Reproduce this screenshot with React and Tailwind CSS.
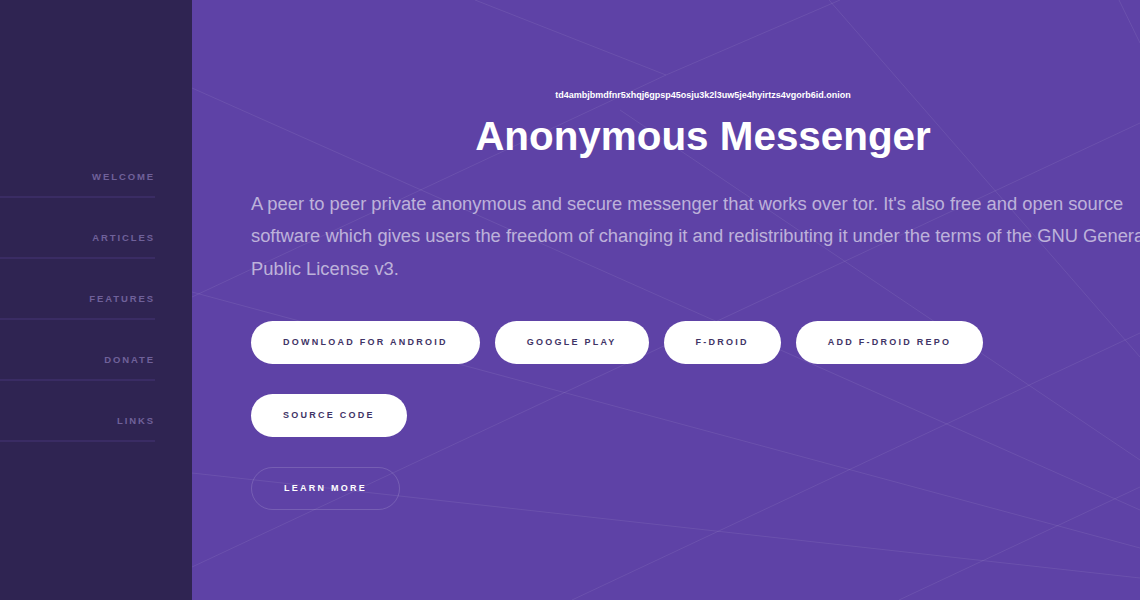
import React from 'react';

const navItems = ['Welcome', 'Articles', 'Features', 'Donate', 'Links'];

// faint network lines behind the hero, in main-area coordinates (948 x 600)
const bgLines = [
  [283, 0, 474, 75],
  [474, 75, 648, 0],
  [0, 297, 474, 75],
  [0, 88, 948, 510],
  [637, 0, 948, 357],
  [927, 0, 948, 43],
  [428, 110, 948, 460],
  [0, 567, 948, 123],
  [380, 600, 948, 333],
  [0, 292, 948, 548],
  [0, 473, 948, 578],
  [948, 487, 707, 600],
];

const Sidebar = () => (
  <aside className="w-[192px] shrink-0 h-full bg-[#2f2452]">
    <nav className="w-[155px] mt-[137px]">
      {navItems.map((item) => (
        <div
          key={item}
          className="h-[61px] flex items-end justify-end pb-[13px] border-b-2 border-[#3a2c64]"
        >
          <span className="text-[9.5px] leading-[12px] font-bold uppercase tracking-[0.2em] text-[#6f619a]">
            {item}
          </span>
        </div>
      ))}
    </nav>
  </aside>
);

const PillButton = ({ children }) => (
  <a className="h-[43px] px-[32px] flex items-center rounded-full bg-white text-[#3f3466] text-[9px] font-bold uppercase tracking-[0.25em] whitespace-nowrap">
    {children}
  </a>
);

const BackgroundLines = () => (
  <svg
    className="absolute inset-0 w-full h-full pointer-events-none"
    viewBox="0 0 948 600"
    preserveAspectRatio="none"
  >
    {bgLines.map(([x1, y1, x2, y2], i) => (
      <line key={i} x1={x1} y1={y1} x2={x2} y2={y2} stroke="rgba(255,255,255,0.08)" strokeWidth="1" />
    ))}
  </svg>
);

export default function App() {
  return (
    <div className="w-[1140px] h-[600px] flex overflow-hidden font-['Liberation_Sans',Arial,sans-serif]">
      <Sidebar />
      <main className="relative flex-1 h-full bg-[#5e42a6] overflow-hidden">
        <BackgroundLines />
        <section className="relative w-[904px] ml-[59px] pt-[89px]">
          <p className="text-center text-[9px] leading-[13.5px] font-bold text-white">
            td4ambjbmdfnr5xhqj6gpsp45osju3k2l3uw5je4hyirtzs4vgorb6id.onion
          </p>
          <h1 className="mt-[13.5px] text-center text-[40.4px] leading-[40px] font-bold text-white">
            Anonymous Messenger
          </h1>
          <p className="mt-[32px] text-[18.35px] leading-[32.4px] text-white/60">
            A peer to peer private anonymous and secure messenger that works over tor. It's also free and open
            source software which gives users the freedom of changing it and redistributing it under the terms of
            the GNU General Public License v3.
          </p>
          <div className="mt-[36px] flex flex-col gap-[30px]">
            <div className="flex gap-[15px]">
              <PillButton>Download for Android</PillButton>
              <PillButton>Google Play</PillButton>
              <PillButton>F-Droid</PillButton>
              <PillButton>Add F-Droid Repo</PillButton>
            </div>
            <div className="flex">
              <PillButton>Source Code</PillButton>
            </div>
            <div className="flex">
              <a className="h-[43px] px-[32px] flex items-center rounded-full border border-white/15 text-white text-[9px] font-bold uppercase tracking-[0.25em] whitespace-nowrap">
                Learn More
              </a>
            </div>
          </div>
        </section>
      </main>
    </div>
  );
}
